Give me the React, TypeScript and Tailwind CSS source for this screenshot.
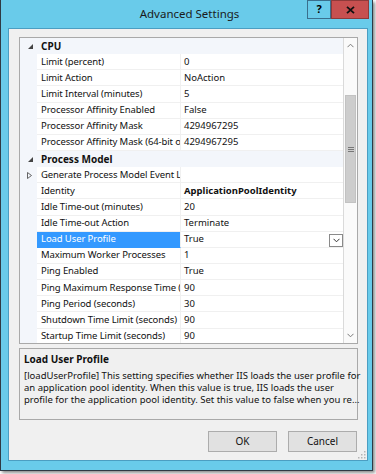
import React from "react";

type Row = { name: string; value: string; bold?: boolean; selected?: boolean; expandable?: boolean };

const cpu: Row[] = [
  { name: "Limit (percent)", value: "0" },
  { name: "Limit Action", value: "NoAction" },
  { name: "Limit Interval (minutes)", value: "5" },
  { name: "Processor Affinity Enabled", value: "False" },
  { name: "Processor Affinity Mask", value: "4294967295" },
  { name: "Processor Affinity Mask (64-bit option)", value: "4294967295" },
];

const pm: Row[] = [
  { name: "Generate Process Model Event Log Entry", value: "", expandable: true },
  { name: "Identity", value: "ApplicationPoolIdentity", bold: true },
  { name: "Idle Time-out (minutes)", value: "20" },
  { name: "Idle Time-out Action", value: "Terminate" },
  { name: "Load User Profile", value: "True", selected: true },
  { name: "Maximum Worker Processes", value: "1" },
  { name: "Ping Enabled", value: "True" },
  { name: "Ping Maximum Response Time (seconds)", value: "90" },
  { name: "Ping Period (seconds)", value: "30" },
  { name: "Shutdown Time Limit (seconds)", value: "90" },
  { name: "Startup Time Limit (seconds)", value: "90" },
];

function Header({ title }: { title: string }) {
  return (
    <div className="flex h-[16.15px] shrink-0 items-center bg-[#f3f6fb]">
      <div className="flex w-[17px] shrink-0 items-center justify-start pl-[8px]">
        <svg width="5" height="5" viewBox="0 0 5 5">
          <polygon points="5,0 5,5 0,5" fill="#444" />
        </svg>
      </div>
      <div className="pl-[4px] font-bold text-[#111] text-[10px]">{title}</div>
    </div>
  );
}

function PropRow({ r }: { r: Row }) {
  return (
    <div className="flex h-[16.15px] shrink-0">
      <div className="flex w-[17px] shrink-0 items-center bg-[#f3f6fb] pl-[7px]">
        {r.expandable && (
          <svg width="5" height="7" viewBox="0 0 5 7">
            <polygon points="0.5,0.5 4.5,3.5 0.5,6.5" fill="none" stroke="#555" strokeWidth="0.9" />
          </svg>
        )}
      </div>
      <div
        className={
          "flex w-[144px] shrink-0 items-center overflow-hidden whitespace-nowrap border-b border-r pl-[4px] tracking-[-0.1px] " +
          (r.selected ? "bg-[#3399ff] text-white border-b-[#3399ff] border-r-[#f0f0f0]" : "bg-white text-[#111] border-[#f0f0f0]")
        }
      >
        {r.name}
      </div>
      <div
        className={
          "flex min-w-0 flex-1 items-center whitespace-nowrap border-b border-[#f0f0f0] bg-white pl-[3px] text-[#111] " +
          (r.bold ? "font-bold" : "")
        }
      >
        <span>{r.value}</span>
        {r.selected && (
          <div className="ml-auto mt-[3px] flex h-[13px] w-[14px] items-center justify-center border border-[#8a8a8a] bg-white">
            <svg width="7" height="5" viewBox="0 0 7 5">
              <polyline points="0.5,0.8 3.5,3.8 6.5,0.8" fill="none" stroke="#333" strokeWidth="1" />
            </svg>
          </div>
        )}
      </div>
    </div>
  );
}

function Chevron({ up }: { up?: boolean }) {
  return (
    <svg width="7" height="5" viewBox="0 0 7 5">
      <polyline
        points={up ? "0.5,4.2 3.5,1.2 6.5,4.2" : "0.5,0.8 3.5,3.8 6.5,0.8"}
        fill="none"
        stroke="#7a7a7a"
        strokeWidth="1"
      />
    </svg>
  );
}

export default function App() {
  return (
    <div
      className="relative h-[474px] w-[376px] overflow-hidden bg-white"
      style={{ fontFamily: '"Noto Sans", "Open Sans", sans-serif' }}
    >
      <div className="flex h-[471px] w-[373px] flex-col border-x border-b border-[#2f3a44] bg-[#69cbea] pb-[9px] pl-[7px] pr-[4px] shadow-[2px_2px_3px_rgba(0,0,0,0.45)]">
        {/* title bar */}
        <div className="relative flex h-[28px] shrink-0 items-center justify-center">
          <div className="ml-[3px] mt-[-1px] text-[11.5px] text-[#1b1b1b]">Advanced Settings</div>
          <div className="absolute right-[-1px] top-0 flex h-[19px]">
            <div className="flex w-[24px] items-center justify-center border border-[#3a6f8d] bg-[#69cbea] text-[11px] font-bold text-black">
              ?
            </div>
            <div className="flex w-[38px] items-center justify-center border border-[#8e3a3a] bg-[#c75050] text-[11px] font-bold text-black">
              <svg width="9" height="8" viewBox="0 0 9 8">
                <path d="M1 0.8 L8 7.2 M8 0.8 L1 7.2" stroke="#111" strokeWidth="1.8" />
              </svg>
            </div>
          </div>
        </div>

        {/* client */}
        <div className="relative flex flex-1 flex-col border border-[#4b9ec2] bg-[#f0f0f0] pb-[8px] pl-[10px] pr-[9px] pt-[8px] text-[9.5px]">
          {/* property grid */}
          <div className="flex h-[307px] shrink-0 border border-[#a9a9a9] bg-white">
            <div className="flex min-w-0 flex-1 flex-col overflow-hidden">
              <Header title="CPU" />
              {cpu.map((r) => (
                <PropRow key={r.name} r={r} />
              ))}
              <Header title="Process Model" />
              {pm.map((r) => (
                <PropRow key={r.name} r={r} />
              ))}
            </div>
            <div className="flex w-[14px] shrink-0 flex-col border-l border-[#dadada] bg-[#fafafa]">
              <div className="flex h-[15px] shrink-0 items-center justify-center">
                <Chevron up />
              </div>
              <div className="h-[42px] shrink-0" />
              <div className="mx-[1px] flex h-[108px] shrink-0 items-center justify-center border border-[#c2c2c2] bg-[#cdcdcd]">
                <svg width="6" height="5" viewBox="0 0 6 5">
                  <path d="M0 0.5 H6 M0 2.5 H6 M0 4.5 H6" stroke="#777" strokeWidth="1" />
                </svg>
              </div>
              <div className="flex-1" />
              <div className="flex h-[15px] shrink-0 items-center justify-center">
                <Chevron />
              </div>
            </div>
          </div>

          {/* description */}
          <div className="mt-[4px] h-[72px] shrink-0 border border-[#a9a9a9] bg-[#f0f0f0] px-[4px] pt-[3px] text-[#111]">
            <div className="text-[10px] font-bold leading-[14px]">Load User Profile</div>
            <div className="mt-[4px] whitespace-nowrap leading-[12.2px]">
              <div>[loadUserProfile] This setting specifies whether IIS loads the user profile for</div>
              <div>an application pool identity. When this value is true, IIS loads the user</div>
              <div>profile for the application pool identity. Set this value to false when you re...</div>
            </div>
          </div>

          {/* buttons */}
          <div className="mt-[11px] flex shrink-0 justify-end gap-[11px] pr-[1px]">
            <div className="flex h-[21px] w-[69px] items-center justify-center border border-[#acacac] bg-[#e1e1e1] text-[10px] text-[#111]">
              OK
            </div>
            <div className="flex h-[21px] w-[69px] items-center justify-center border border-[#acacac] bg-[#e1e1e1] text-[10px] text-[#111]">
              Cancel
            </div>
          </div>

          {/* resize grip */}
          <div className="absolute bottom-[1px] right-[1px]">
            <svg width="8" height="8" viewBox="0 0 8 8">
              {[
                [6, 0],
                [6, 3],
                [3, 3],
                [6, 6],
                [3, 6],
                [0, 6],
              ].map(([x, y], i) => (
                <rect key={i} x={x} y={y} width="1.5" height="1.5" fill="#b5b5b5" />
              ))}
            </svg>
          </div>
        </div>
      </div>
    </div>
  );
}
